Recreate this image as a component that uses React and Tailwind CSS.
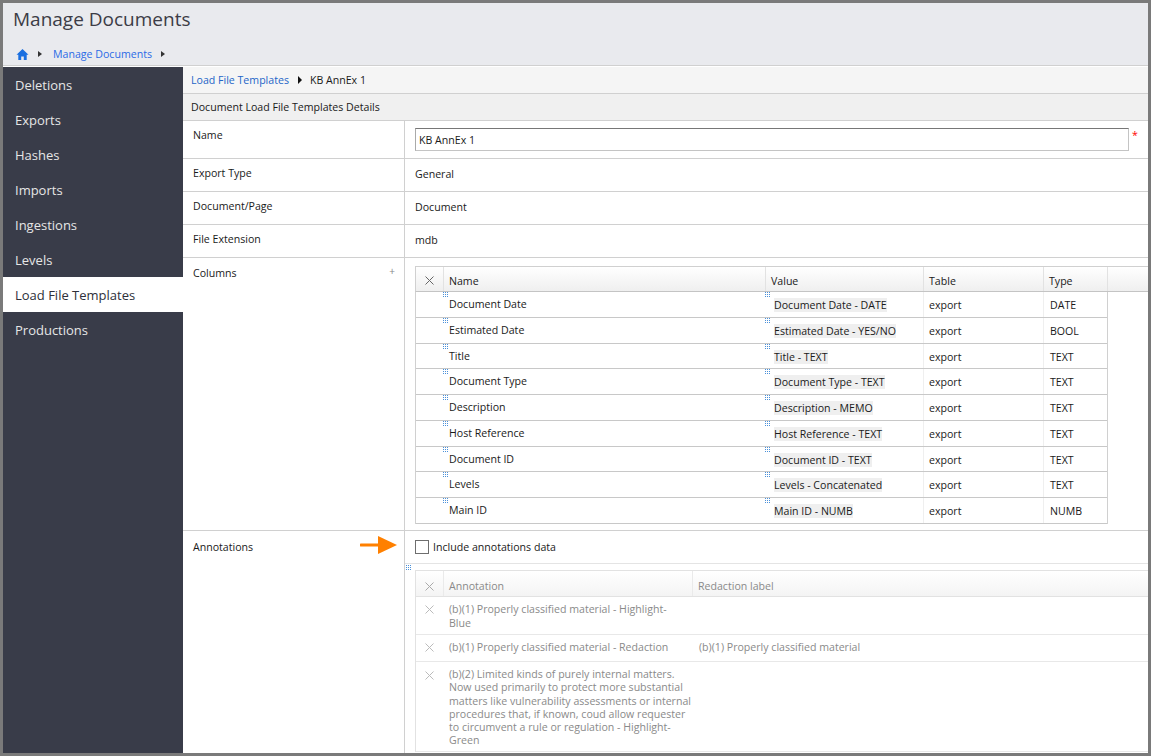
import React from "react";

const nav = ["Deletions","Exports","Hashes","Imports","Ingestions","Levels","Load File Templates","Productions"];
const rows = [
  ["Document Date","Document Date - DATE","DATE"],
  ["Estimated Date","Estimated Date - YES/NO","BOOL"],
  ["Title","Title - TEXT","TEXT"],
  ["Document Type","Document Type - TEXT","TEXT"],
  ["Description","Description - MEMO","TEXT"],
  ["Host Reference","Host Reference - TEXT","TEXT"],
  ["Document ID","Document ID - TEXT","TEXT"],
  ["Levels","Levels - Concatenated","TEXT"],
  ["Main ID","Main ID - NUMB","NUMB"],
];

function Dots({ className = "" }) {
  return (
    <svg width="5" height="5" viewBox="0 0 5 5" className={`absolute ${className}`}>
      {[0,2,4].flatMap(x => [0,2,4].map(y => <rect key={`${x}${y}`} x={x} y={y} width="1" height="1" fill="#4a90d9" />))}
    </svg>
  );
}

function Cross({ color = "#666", size = 9 }) {
  return (
    <svg width={size} height={size} viewBox="0 0 9 9">
      <path d="M0.5 0.5L8.5 8.5M8.5 0.5L0.5 8.5" stroke={color} strokeWidth="1" fill="none" />
    </svg>
  );
}

function Row({ label, className = "", children }) {
  return (
    <div className={`flex border-b border-[#d0d0d0] ${className}`}>
      <div className="w-[222px] shrink-0 border-r border-[#d0d0d0] pl-[10px] pt-[7px]">{label}</div>
      <div className="flex-1 min-w-0">{children}</div>
    </div>
  );
}

export default function App() {
  return (
    <div className="w-[1151px] h-[756px] overflow-hidden border-[3px] border-[#7a7a7a] bg-white text-[10.6px] leading-[14px] text-[#1a1a1a] flex flex-col font-['Open_Sans',sans-serif]">
      <header className="h-[63px] shrink-0 bg-[#e9eaee] border-b border-[#d0d0d0] pl-[10px] flex flex-col">
        <h1 className="text-[19px] leading-[26px] mt-[3px] text-[#3c3c46] font-normal">Manage Documents</h1>
        <div className="flex items-center mt-[14px] h-[16px] pl-[3px]">
          <svg width="13" height="13" viewBox="0 0 13 13"><path d="M6.5 1L0.5 6.8H2.3V12H5.2V8.4H7.8V12H10.7V6.8H12.5Z" fill="#1a6fe0"/></svg>
          <span className="ml-[9px] w-0 h-0 border-y-[3px] border-y-transparent border-l-[4px] border-l-[#333]" />
          <a className="ml-[11px] text-[#2b6be6]">Manage Documents</a>
          <span className="ml-[9px] w-0 h-0 border-y-[3px] border-y-transparent border-l-[4px] border-l-[#333]" />
        </div>
      </header>
      <div className="flex flex-1 min-h-0 mt-[1px]">
        <nav className="w-[180px] shrink-0 bg-[#393c49] text-[#e6e6e6] text-[13px]">
          {nav.map(n => (
            <div key={n} className={`h-[35px] flex items-center pl-[12px] ${n === "Load File Templates" ? "bg-white text-[#2e303a] font-medium" : ""}`}>{n}</div>
          ))}
        </nav>
        <main className="flex-1 min-w-0 flex flex-col">
          <div className="h-[27px] shrink-0 bg-[#f5f5f5] border-b border-[#d0d0d0] flex items-center pl-[8px]">
            <a className="text-[#2465c8]">Load File Templates</a>
            <span className="ml-[9px] w-0 h-0 border-y-[4px] border-y-transparent border-l-[4px] border-l-[#111]" />
            <span className="ml-[8px]">KB AnnEx 1</span>
          </div>
          <div className="h-[27px] shrink-0 bg-[#f0f0f0] border-b border-[#d0d0d0] flex items-center pl-[8px]">Document Load File Templates Details</div>
          <Row label="Name" className="h-[38px]">
            <div className="flex items-start pt-[7px] pl-[10px]">
              <div className="w-[714px] h-[23px] border border-[#c4c4c4] border-t-[#777] border-l-[#aaa] flex items-center pl-[3px]">KB AnnEx 1</div>
              <span className="ml-[3px] text-[#f00] leading-[14px]">*</span>
            </div>
          </Row>
          <Row label="Export Type" className="h-[33px]"><div className="pl-[10px] pt-[8px]">General</div></Row>
          <Row label="Document/Page" className="h-[33px]"><div className="pl-[10px] pt-[8px]">Document</div></Row>
          <Row label="File Extension" className="h-[33px]"><div className="pl-[10px] pt-[8px]">mdb</div></Row>
          <Row label={<div className="flex justify-between pr-[9px] pt-[1px]"><span>Columns</span><span className="text-[#888] text-[10px] leading-[10px]">+</span></div>} className="h-[273px]">
            <div className="pl-[10px] pt-[8px]">
              <div className="h-[26px] flex border-y border-l border-[#d0d0d0] border-b-[#c4c4c4] bg-gradient-to-b from-white to-[#efefef]">
                <div className="w-[28px] flex items-center justify-center border-r border-[#e2e2e2] pt-[3px]"><Cross /></div>
                <div className="w-[322px] pl-[5px] pt-[3px] flex items-center border-r border-[#e2e2e2]">Name</div>
                <div className="w-[158px] pl-[5px] pt-[3px] flex items-center border-r border-[#e2e2e2]">Value</div>
                <div className="w-[120px] pl-[5px] pt-[3px] flex items-center border-r border-[#e2e2e2]">Table</div>
                <div className="w-[64px] pl-[5px] pt-[3px] flex items-center border-r border-[#e2e2e2]">Type</div>
                <div className="flex-1" />
              </div>
              <div className="w-[693px] border-x border-[#d0d0d0]">
                {rows.map(([a,b,c]) => (
                  <div key={a} className="h-[25.75px] flex border-b border-[#c8c8c8]">
                    <div className="w-[27px] shrink-0" />
                    <div className="relative w-[322px] shrink-0 pl-[6px] pt-[5px]"><Dots className="left-0 top-0" />{a}</div>
                    <div className="relative w-[158px] shrink-0 pl-[9px] pt-[6px]"><Dots className="left-0 top-0" /><span className="bg-[#efefef] inline-block">{b}</span></div>
                    <div className="w-[120px] shrink-0 pl-[5px] pt-[6px] border-l border-[#efefef]">export</div>
                    <div className="flex-1 pl-[6px] pt-[6px] border-l border-[#efefef]">{c}</div>
                  </div>
                ))}
              </div>
            </div>
          </Row>
          <div className="flex flex-1 min-h-0">
            <div className="w-[222px] shrink-0 border-r border-[#d0d0d0] pl-[10px] pt-[9px]">Annotations</div>
            <div className="flex-1 min-w-0 relative">
              <svg width="38" height="20" viewBox="0 0 38 20" className="absolute left-[-45px] top-[4px]">
                <path d="M1 10H20" stroke="#ff8000" strokeWidth="3" strokeLinecap="round" />
                <path d="M18 1L37 10L18 19Z" fill="#ff8000" />
              </svg>
              <div className="h-[33px] border-b border-[#e4e4e4] flex items-center pl-[10px]">
                <span className="w-[14px] h-[14px] border border-[#6e6e6e] bg-white" />
                <span className="ml-[4px]">Include annotations data</span>
              </div>
              <Dots className="left-[1px] top-[34px]" />
              <div className="pl-[10px] pt-[6px] text-[#8a8a8a]">
                <div className="h-[27px] flex border-y border-l border-[#e2e2e2] bg-gradient-to-b from-white to-[#f4f4f4]">
                  <div className="w-[28px] flex items-center justify-center border-r border-[#eaeaea] pt-[5px]"><Cross color="#aaa" /></div>
                  <div className="w-[249px] pl-[5px] pt-[5px] flex items-center border-r border-[#eaeaea]">Annotation</div>
                  <div className="flex-1 pl-[5px] pt-[5px] flex items-center">Redaction label</div>
                </div>
                <div className="border-l border-[#e2e2e2]">
                  <div className="h-[38px] flex border-b border-[#e8e8e8]">
                    <div className="w-[28px] pt-[8px] pr-[2px] flex justify-center items-start"><Cross color="#bbb" /></div>
                    <div className="w-[250px] pl-[5px] pt-[5px] whitespace-nowrap">(b)(1) Properly classified material - Highlight-<br />Blue</div>
                  </div>
                  <div className="h-[27px] flex border-b border-[#e8e8e8]">
                    <div className="w-[28px] pt-[8px] pr-[2px] flex justify-center items-start"><Cross color="#bbb" /></div>
                    <div className="w-[250px] pl-[5px] pt-[5px]">(b)(1) Properly classified material - Redaction</div>
                    <div className="pl-[5px] pt-[5px]">(b)(1) Properly classified material</div>
                  </div>
                  <div className="h-[90px] flex border-b border-[#e8e8e8]">
                    <div className="w-[28px] pt-[9px] pr-[2px] flex justify-center items-start"><Cross color="#bbb" /></div>
                    <div className="w-[250px] pl-[5px] pt-[6px] leading-[13.3px] whitespace-nowrap">(b)(2) Limited kinds of purely internal matters.<br />Now used primarily to protect more substantial<br />matters like vulnerability assessments or internal<br />procedures that, if known, coud allow requester<br />to circumvent a rule or regulation - Highlight-<br />Green</div>
                  </div>
                </div>
              </div>
            </div>
          </div>
        </main>
      </div>
    </div>
  );
}
